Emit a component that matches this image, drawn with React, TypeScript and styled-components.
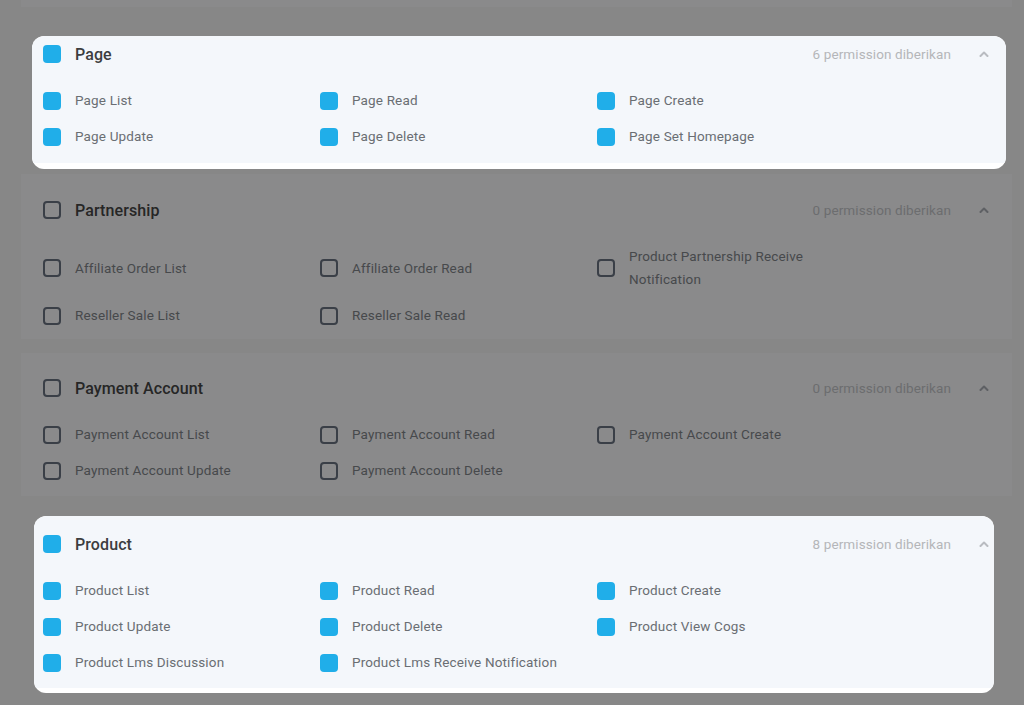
import React from "react";
import styled, { createGlobalStyle, css } from "styled-components";

type Group = {
  name: string;
  items: string[];
  checked: boolean;
};

const GlobalStyle = createGlobalStyle`
  html, body {
    margin: 0;
    padding: 0;
    background: #878787;
    font-family: Roboto, "Liberation Sans", Arial, sans-serif;
  }
`;

const Page = styled.div`
  width: 991px;
  padding-left: 21px;
  height: 705px;
  overflow: hidden;
  display: flex;
  flex-direction: column;
`;

const Sliver = styled.div`
  height: 7px;
  background: #8a8a8b;
`;

type CardProps = {
  $lit: boolean;
  $top: number;
  $bottom: number;
  $padL: number;
  $padR: number;
};

const Card = styled.section<CardProps>`
  display: flex;
  flex-direction: column;
  gap: 24px;
  padding: ${({ $top, $bottom, $padL, $padR }) =>
    `${$top}px ${$padR}px ${$bottom}px ${$padL}px`};
  background: ${({ $lit }) => ($lit ? "#f4f7fb" : "#8a8a8b")};
  ${({ $lit }) =>
    $lit &&
    css`
      border-radius: 12px 12px 0 0;
    `}
`;

const Spotlight = styled.div<{ $l: number; $r: number; $mt: number; $pb: number }>`
  margin: ${({ $mt, $r, $l }) => `${$mt}px ${$r}px 0 ${$l}px`};
  padding-bottom: ${({ $pb }) => $pb}px;
  background: #ffffff;
  border-radius: 12px;
  overflow: hidden;
`;

const Header = styled.div`
  display: flex;
  align-items: center;
  height: 22px;
`;

const Box = styled.span<{ $on: boolean }>`
  flex: none;
  width: 18px;
  height: 18px;
  box-sizing: border-box;
  border-radius: 4px;
  ${({ $on }) =>
    $on
      ? css`
          background: #20aee9;
        `
      : css`
          border: 2px solid #3a3f47;
        `}
`;

const Title = styled.h3<{ $lit: boolean }>`
  margin: 0 0 0 14px;
  font-size: 16px;
  font-weight: 500;
  letter-spacing: 0.1px;
  color: ${({ $lit }) => ($lit ? "#3c3d3f" : "#262626")};
  flex: 1;
`;

const Count = styled.span<{ $lit: boolean }>`
  font-size: 13.5px;
  letter-spacing: 0.1px;
  color: ${({ $lit }) => ($lit ? "#b4b6b9" : "#6c6d6f")};
`;

const Chevron = styled.svg<{ $lit: boolean }>`
  margin-left: 28px;
  width: 10px;
  height: 6px;
  color: ${({ $lit }) => ($lit ? "#b9bcc1" : "#5e6064")};
`;

const Grid = styled.div`
  display: grid;
  grid-template-columns: 277px 277px 277px;
  row-gap: 13px;
`;

const Item = styled.label`
  display: flex;
  align-items: center;
  gap: 14px;
`;

const ItemText = styled.span<{ $lit: boolean }>`
  font-size: 13.5px;
  line-height: 23px;
  letter-spacing: 0.15px;
  color: ${({ $lit }) => ($lit ? "#6a6e73" : "#47494c")};
`;

const groups: Group[] = [
  {
    name: "Page",
    checked: true,
    items: [
      "Page List",
      "Page Read",
      "Page Create",
      "Page Update",
      "Page Delete",
      "Page Set Homepage",
    ],
  },
  {
    name: "Partnership",
    checked: false,
    items: [
      "Affiliate Order List",
      "Affiliate Order Read",
      "Product Partnership Receive Notification",
      "Reseller Sale List",
      "Reseller Sale Read",
    ],
  },
  {
    name: "Payment Account",
    checked: false,
    items: [
      "Payment Account List",
      "Payment Account Read",
      "Payment Account Create",
      "Payment Account Update",
      "Payment Account Delete",
    ],
  },
  {
    name: "Product",
    checked: true,
    items: [
      "Product List",
      "Product Read",
      "Product Create",
      "Product Update",
      "Product Delete",
      "Product View Cogs",
      "Product Lms Discussion",
      "Product Lms Receive Notification",
    ],
  },
];

type SectionProps = {
  group: Group;
  lit: boolean;
  top: number;
  bottom: number;
  padL?: number;
  padR?: number;
};

const Section = ({ group, lit, top, bottom, padL = 22, padR = 23 }: SectionProps) => (
  <Card $lit={lit} $top={top} $bottom={bottom} $padL={padL} $padR={padR}>
    <Header>
      <Box $on={group.checked} />
      <Title $lit={lit}>{group.name}</Title>
      <Count $lit={lit}>
        {group.checked ? group.items.length : 0} permission diberikan
      </Count>
      <Chevron $lit={lit} viewBox="0 0 10 6" fill="none">
        <path
          d="M1.5 5 L5 1.5 L8.5 5"
          stroke="currentColor"
          strokeWidth="2"
          strokeLinecap="round"
          strokeLinejoin="round"
        />
      </Chevron>
    </Header>
    <Grid>
      {group.items.map((item) => (
        <Item key={item}>
          <Box $on={group.checked} />
          <ItemText $lit={lit}>{item}</ItemText>
        </Item>
      ))}
    </Grid>
  </Card>
);

const DimWrap = styled.div<{ $mt: number }>`
  margin-top: ${({ $mt }) => $mt}px;
`;

const App = () => {
  const [page, partnership, payment, product] = groups;
  return (
    <>
      <GlobalStyle />
      <Page>
        <Sliver />
        <Spotlight $mt={29} $l={11} $r={6} $pb={6}>
          <Section group={page} lit top={7} bottom={15} padL={11} padR={17} />
        </Spotlight>
        <DimWrap $mt={5}>
          <Section group={partnership} lit={false} top={25} bottom={12} />
        </DimWrap>
        <DimWrap $mt={14}>
          <Section group={payment} lit={false} top={24} bottom={14} />
        </DimWrap>
        <Spotlight $mt={20} $l={13} $r={18} $pb={5}>
          <Section group={product} lit top={17} bottom={14} padL={9} padR={5} />
        </Spotlight>
      </Page>
    </>
  );
};

export default App;
